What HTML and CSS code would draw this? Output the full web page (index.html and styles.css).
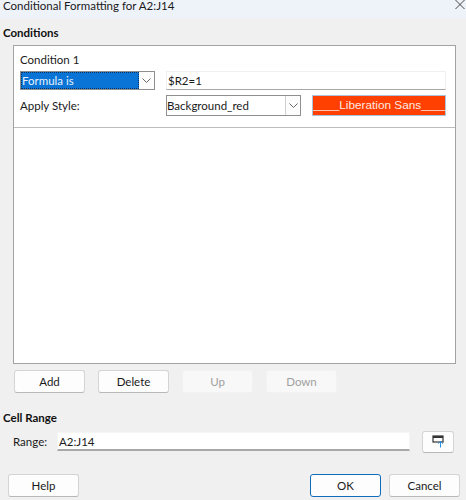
FILE: index.html
```html
<!DOCTYPE html>
<html lang="en">
<head>
<meta charset="utf-8">
<title>Conditional Formatting for A2:J14</title>
<link rel="stylesheet" href="styles.css">
</head>
<body>
<div class="dialog">
  <header class="titlebar">
    <span class="title">Conditional Formatting for A2:J14</span>
    <svg class="close" width="10" height="10" viewBox="0 0 10 10"><path d="M0.5 0 L9.5 9 M9.5 0 L0.5 9" stroke="#333" stroke-width="0.9" fill="none"/></svg>
  </header>
  <h2 class="section-head conditions-head">Conditions</h2>
  <div class="panel">
    <div class="condition">
      <div class="cond-title">Condition 1</div>
      <div class="cond-row first">
        <div class="listbox">
          <span class="selected">Formula is</span>
          <span class="arrow"><svg width="9" height="5" viewBox="0 0 9 5"><path d="M0.5 0.5 L4.5 4.5 L8.5 0.5" stroke="#666" fill="none"/></svg></span>
        </div>
        <div class="input formula">$R2=1</div>
      </div>
      <div class="cond-row second">
        <span class="label">Apply Style:</span>
        <div class="combo">
          <span class="combo-text">Background_red</span>
          <span class="arrow"><svg width="9" height="5" viewBox="0 0 9 5"><path d="M0.5 0.5 L4.5 4.5 L8.5 0.5" stroke="#666" fill="none"/></svg></span>
        </div>
        <div class="preview">____Liberation Sans____</div>
      </div>
    </div>
  </div>
  <div class="actions">
    <button class="btn">Add</button>
    <button class="btn">Delete</button>
    <button class="btn disabled">Up</button>
    <button class="btn disabled">Down</button>
  </div>
  <h2 class="section-head range-head">Cell Range</h2>
  <div class="range-row">
    <span class="range-label">Range:</span>
    <div class="input range">A2:J14</div>
    <button class="btn ref">
      <svg width="13" height="13" viewBox="0 0 13 13"><rect x="1" y="1" width="10" height="6" fill="none" stroke="#333" stroke-width="1.2"/><rect x="1" y="1" width="10" height="2" fill="#333"/><path d="M8.5 12.5 V6.5 M6.3 8.7 L8.5 6.5 L10.7 8.7" stroke="#2a8fe0" stroke-width="1" fill="none"/></svg>
    </button>
  </div>
  <footer class="footer">
    <button class="btn">Help</button>
    <div class="footer-right">
      <button class="btn default">OK</button>
      <button class="btn">Cancel</button>
    </div>
  </footer>
</div>
</body>
</html>
```
FILE: styles.css
```css
* { box-sizing: border-box; }
html, body { margin: 0; padding: 0; }
body { width: 466px; height: 500px; overflow: hidden; background: #f0f0f0; color: #1a1a1a; font: 11.5px/14px Lato, Roboto, sans-serif; }
.dialog { display: flex; flex-direction: column; height: 500px; }
.titlebar { height: 18px; background: #eef2f9; display: flex; justify-content: space-between; padding: 0 0 0 3px; flex: none; }
.title { line-height: 12px; font-size: 11.5px; }
.close { margin: 0 1px 0 0; }
.section-head { margin: 0; font-size: 11.5px; line-height: 14px; font-weight: 700; color: #111; }
.conditions-head { margin: 8px 0 0 3px; }
.panel { margin: 5px 0 0 13px; width: 443px; height: 319px; background: #fff; border: 1px solid #a3a3a3; border-width: 1px 1px 1px 1.5px; }
.condition { height: 82px; border-bottom: 1px solid #bdbdbd; padding: 6px 9px 0 6px; }
.cond-title { height: 18px; line-height: 15px; }
.cond-row { display: flex; align-items: center; }
.first { height: 20px; }
.second { height: 21px; margin-top: 5px; }
.listbox { width: 135px; height: 19px; display: flex; border: 1px solid #8f8f8f; background: #fff; }
.selected { flex: 1; background: #0a74d6; color: #e8f2fc; line-height: 17px; padding-left: 1px; outline: 1px dotted #0a3560; outline-offset: -1px; }
.arrow { width: 15px; display: flex; align-items: center; justify-content: center; background: #fdfdfd; flex: none; }
.input { background: #fff; border: 1px solid #f0f0f0; border-bottom: 1px solid #a8a8a8; line-height: 17px; padding-left: 1px; }
.formula { width: 280px; height: 19px; margin-left: 11px; }
.label { width: 146px; flex: none; }
.combo { width: 135px; height: 21px; display: flex; border: 1px solid #8f8f8f; background: #fff; }
.combo-text { flex: 1; line-height: 19px; padding-left: 0; }
.combo .arrow { border-left: 1px solid #d0d0d0; }
.preview { width: 134px; height: 21px; margin-left: 11px; background: #ff4000; color: #fde8e0; border: 1px solid #a9c4da; font: 11.8px/19px "Liberation Sans", Arial, sans-serif; text-align: center; white-space: nowrap; }
.actions { display: flex; gap: 13px; margin: 6px 0 0 14px; }
.btn { width: 71px; height: 23px; padding: 0; background: #fdfdfd; border: 1px solid #d4d4d4; border-bottom-color: #b8b8b8; border-radius: 3px; color: #1a1a1a; font: 11.5px/14px Lato, Roboto, sans-serif; }
.disabled { background: #f8f8f8; border-color: #f2f2f2; color: #a0a0a0; }
.range-head { margin: 18px 0 0 3px; }
.range-row { display: flex; align-items: center; margin: 6px 0 0 13px; height: 21px; }
.range-label { width: 44px; flex: none; }
.range { width: 353px; height: 19px; border-color: #f5f5f5; border-bottom-color: #a8a8a8; border-bottom-width: 2px; padding-left: 1px; }
.ref { width: 32px; height: 22px; margin-left: 12px; display: flex; align-items: center; justify-content: center; }
.footer { display: flex; justify-content: space-between; margin: 22px 6px 0 8px; }
.footer-right { display: flex; gap: 8px; }
.default { border: 1px solid #0f6cbd; }
```
